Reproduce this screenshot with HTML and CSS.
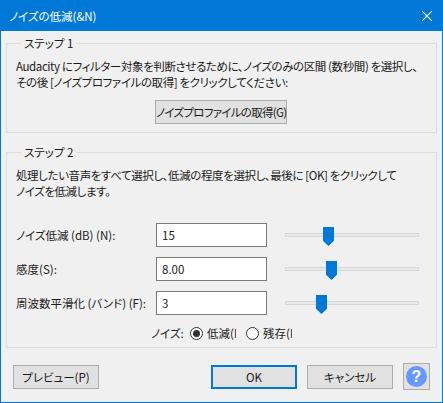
FILE: index.html
```html
<!DOCTYPE html>
<html lang="ja">
<head>
    <meta charset="UTF-8">
    <title>ノイズの低減</title>
    <link rel="stylesheet" href="styles.css">
</head>
<body>
    <div class="dialog">
        <div class="titlebar">
            <span class="title">ノイズの低減(&amp;N)</span>
            <svg class="close" width="10" height="10" viewBox="0 0 10 10"><path d="M0 0L10 10M10 0L0 10" stroke="#fff" stroke-width="1.1" fill="none"/></svg>
        </div>

        <!-- Step 1 -->
        <fieldset class="group first">
            <legend>ステップ 1</legend>
            <p class="text">Audacity にフィルター対象を判断させるために、ノイズのみの区間 (数秒間) を選択し、<br>その後 [ノイズプロファイルの取得] をクリックしてください:</p>
            <button class="button profile">ノイズプロファイルの取得(G)</button>
        </fieldset>

        <!-- Step 2 -->
        <fieldset class="group second">
            <legend>ステップ 2</legend>
            <p class="text">処理したい音声をすべて選択し、低減の程度を選択し、最後に [OK] をクリックして<br>ノイズを低減します。</p>
            <div class="rows">
                <label class="row-label">ノイズ低減 (dB) (N):</label>
                <input class="field" type="text" value="15">
                <div class="slider"><span class="thumb" style="left: 37px"></span></div>

                <label class="row-label">感度(S):</label>
                <input class="field" type="text" value="8.00">
                <div class="slider"><span class="thumb" style="left: 40px"></span></div>

                <label class="row-label">周波数平滑化 (バンド) (F):</label>
                <input class="field" type="text" value="3">
                <div class="slider"><span class="thumb" style="left: 30px"></span></div>
            </div>
            <div class="radios">
                <span class="radio-title">ノイズ:</span>
                <span class="radio on"></span>
                <span class="radio-text">低減(R)</span>
                <span class="radio"></span>
                <span class="radio-text">残存(K)</span>
            </div>
        </fieldset>

        <div class="footer">
            <button class="button">プレビュー(P)</button>
            <button class="button ok">OK</button>
            <button class="button">キャンセル</button>
            <button class="help"><span class="help-icon">?</span></button>
        </div>
    </div>
</body>
</html>
```

FILE: styles.css
```css
html, body {
    margin: 0;
    padding: 0;
}
body {
    font-family: "Noto Sans CJK JP", "Open Sans", sans-serif;
    font-size: 11.5px;
    color: #1a1a1a;
    background-color: #f0f0f0;
    font-feature-settings: "palt";
}
.dialog {
    width: 443px;
    height: 403px;
    box-sizing: border-box;
    border: 1px solid #0078d7;
    border-top: none;
    background-color: #f0f0f0;
    display: flex;
    flex-direction: column;
    overflow: hidden;
}
.titlebar {
    height: 31px;
    margin: 0 -1px;
    padding: 0 11px 0 9px;
    background-color: #0078d7;
    color: #fff;
    display: flex;
    align-items: center;
    justify-content: space-between;
    flex-shrink: 0;
}
.group {
    margin: 0 5px;
    padding: 0 9px;
    border: 1px solid #dcdcdc;
    min-width: 0;
}
.group legend {
    margin-left: 5px;
    padding: 0 3px;
    line-height: 16px;
}
.first {
    margin-top: 4px;
    height: 98px;
    box-sizing: border-box;
}
.second {
    margin-top: 11px;
    height: 204px;
    box-sizing: border-box;
}
.text {
    margin: 7px 0 0;
    line-height: 16px;
    white-space: nowrap;
    letter-spacing: -0.4px;
}
.button {
    width: 86px;
    height: 24px;
    padding: 0;
    font: inherit;
    font-feature-settings: inherit;
    color: inherit;
    background-color: #e1e1e1;
    border: 1px solid #adadad;
    box-sizing: border-box;
    white-space: nowrap;
}
.profile {
    display: block;
    width: 132px;
    margin: 10px 0 0 139px;
    letter-spacing: -0.7px;
}
.rows {
    margin-top: 24px;
    display: grid;
    grid-template-columns: 122px 111px 134px;
    column-gap: 18px;
    row-gap: 10px;
    align-items: center;
}
.row-label {
    white-space: nowrap;
}
.field {
    width: 111px;
    height: 24px;
    box-sizing: border-box;
    border: 1px solid #7a7a7a;
    padding: 0 5px;
    font: inherit;
    color: inherit;
    background-color: #fff;
    outline: none;
}
.slider {
    position: relative;
    height: 4px;
    background-color: #e7eaea;
    border: 1px solid #d6d6d6;
    box-sizing: border-box;
}
.thumb {
    position: absolute;
    top: -7px;
    width: 11px;
    height: 19px;
    background-color: #0078d7;
    clip-path: polygon(0 0, 100% 0, 100% 72%, 50% 100%, 0 72%);
}
.radios {
    margin: 9px 0 0 135px;
    height: 18px;
    display: flex;
    align-items: center;
}
.radio-title {
    width: 39px;
    white-space: nowrap;
}
.radio {
    width: 13px;
    height: 13px;
    box-sizing: border-box;
    border: 1px solid #333;
    border-radius: 50%;
    background-color: #fff;
    display: flex;
    align-items: center;
    justify-content: center;
}
.radio.on::after {
    content: '';
    width: 7px;
    height: 7px;
    border-radius: 50%;
    background-color: #333;
}
.radio-text {
    width: 29px;
    margin: 0 10px 0 4px;
    white-space: nowrap;
    overflow: hidden;
}
.footer {
    margin-top: 15px;
    padding: 0 12px;
    display: flex;
    align-items: center;
    gap: 10px;
}
.footer .button:first-child {
    margin-right: auto;
}
.ok {
    border: 2px solid #0078d7;
}
.help {
    width: 27px;
    height: 27px;
    padding: 0;
    box-sizing: border-box;
    background-color: #e1e1e1;
    border: 1px solid #adadad;
    display: flex;
    align-items: center;
    justify-content: center;
}
.help-icon {
    width: 21px;
    height: 21px;
    border-radius: 50%;
    background-color: #6699ff;
    color: #fff;
    font: bold 16px/21px "Liberation Sans", sans-serif;
    text-align: center;
}
```
